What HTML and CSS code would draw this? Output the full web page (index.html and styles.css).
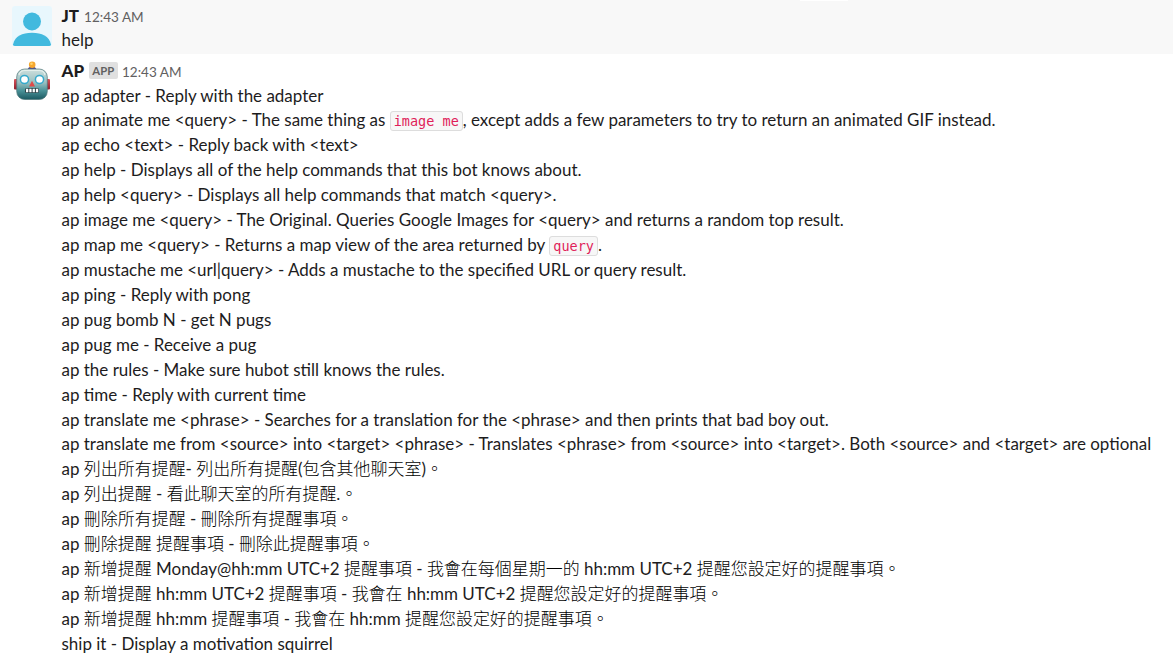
FILE: index.html
```
<!DOCTYPE html>
<html lang="en">
<head>
    <meta charset="UTF-8">
    <meta name="viewport" content="width=device-width, initial-scale=1.0">
    <title>AP - Chat</title>
    <link rel="stylesheet" href="styles.css">
</head>
<body>
    <div class="message hover">
        <div class="jump"></div>
        <svg class="avatar" viewBox="0 0 40 40">
            <rect width="40" height="40" rx="3" fill="#e8f7fd"/>
            <circle cx="20" cy="15.5" r="9" fill="#41b9de"/>
            <path d="M1 38.500 C3 30 10 26.800 20 26.800 S37 30 39 38.500 Q39 40 37 40 H3 Q1 40 1 38.500Z" fill="#41b9de"/>
        </svg>
        <div class="content">
            <div class="header"><b class="name">JT</b><span class="time">12:43 AM</span></div>
            <div class="text">help</div>
        </div>
    </div>
    <div class="message bot">
        <svg class="avatar" viewBox="0 0 40 40">
            <defs>
                <linearGradient id="face" x1="0" y1="0" x2="0" y2="1">
                    <stop offset="0" stop-color="#cfe0de"/>
                    <stop offset="0.45" stop-color="#98bfc0"/>
                    <stop offset="0.7" stop-color="#4b9399"/>
                    <stop offset="1" stop-color="#1b5961"/>
                </linearGradient>
                <linearGradient id="ear" x1="0" y1="0" x2="0" y2="1">
                    <stop offset="0" stop-color="#d9555c"/>
                    <stop offset="1" stop-color="#8e1e2b"/>
                </linearGradient>
            </defs>
            <rect x="2" y="18" width="4" height="10.500" rx="1" fill="url(#ear)"/>
            <rect x="34" y="18" width="4" height="10.500" rx="1" fill="url(#ear)"/>
            <path d="M15.500 9 Q16 5.500 20 5.500 T24.500 9Z" fill="#54498d"/>
            <circle cx="20.200" cy="3.800" r="3.300" fill="#f5a72d"/>
            <circle cx="19.500" cy="2.700" r="1.300" fill="#ffd36b"/>
            <rect x="4.700" y="8" width="30.600" height="30.500" rx="8" fill="url(#face)" stroke="#50777a" stroke-width="0.700"/>
            <path d="M7 14 Q8 9.500 13 9.500 H27 Q32 9.500 33 14" fill="none" stroke="#e4efec" stroke-width="1.200"/>
            <circle cx="12.500" cy="18.500" r="4.800" fill="#35a9cc"/>
            <circle cx="27.500" cy="18.500" r="4.800" fill="#35a9cc"/>
            <circle cx="12.500" cy="18.500" r="3.300" fill="#fff"/>
            <circle cx="27.500" cy="18.500" r="3.300" fill="#fff"/>
            <path d="M20 19.700 L23 25.500 H17Z" fill="#e04a48"/>
            <rect x="13" y="27" width="14" height="5" rx="1.500" fill="#29444a"/>
            <path d="M14 27.800h2.300v3.400h-2.300zM17.300 27.800h2.300v3.400h-2.300zM20.600 27.800h2.300v3.400h-2.300zM23.900 27.800h2.300v3.400h-2.300z" fill="#fff"/>
        </svg>
        <div class="content">
            <div class="header"><b class="name">AP</b><span class="badge">APP</span><span class="time">12:43 AM</span></div>
            <div class="text">ap adapter - Reply with the adapter</div>
            <div class="text">ap animate me &lt;query&gt; - The same thing as <code>image me</code>, except adds a few parameters to try to return an animated GIF instead.</div>
            <div class="text">ap echo &lt;text&gt; - Reply back with &lt;text&gt;</div>
            <div class="text">ap help - Displays all of the help commands that this bot knows about.</div>
            <div class="text">ap help &lt;query&gt; - Displays all help commands that match &lt;query&gt;.</div>
            <div class="text">ap image me &lt;query&gt; - The Original. Queries Google Images for &lt;query&gt; and returns a random top result.</div>
            <div class="text">ap map me &lt;query&gt; - Returns a map view of the area returned by <code>query</code>.</div>
            <div class="text">ap mustache me &lt;url|query&gt; - Adds a mustache to the specified URL or query result.</div>
            <div class="text">ap ping - Reply with pong</div>
            <div class="text">ap pug bomb N - get N pugs</div>
            <div class="text">ap pug me - Receive a pug</div>
            <div class="text">ap the rules - Make sure hubot still knows the rules.</div>
            <div class="text">ap time - Reply with current time</div>
            <div class="text">ap translate me &lt;phrase&gt; - Searches for a translation for the &lt;phrase&gt; and then prints that bad boy out.</div>
            <div class="text">ap translate me from &lt;source&gt; into &lt;target&gt; &lt;phrase&gt; - Translates &lt;phrase&gt; from &lt;source&gt; into &lt;target&gt;. Both &lt;source&gt; and &lt;target&gt; are optional</div>
            <div class="text">ap <span class="zh">列出所有提醒</span>- <span class="zh">列出所有提醒</span>(<span class="zh">包含其他聊天室</span>)<span class="zh">。</span></div>
            <div class="text">ap <span class="zh">列出提醒</span> - <span class="zh">看此聊天室的所有提醒</span>.<span class="zh">。</span></div>
            <div class="text">ap <span class="zh">刪除所有提醒</span> - <span class="zh">刪除所有提醒事項。</span></div>
            <div class="text">ap <span class="zh">刪除提醒</span> <span class="zh">提醒事項</span> - <span class="zh">刪除此提醒事項。</span></div>
            <div class="text">ap <span class="zh">新增提醒</span> Monday@hh:mm UTC+2 <span class="zh">提醒事項</span> - <span class="zh">我會在每個星期一的</span> hh:mm UTC+2 <span class="zh">提醒您設定好的提醒事項。</span></div>
            <div class="text">ap <span class="zh">新增提醒</span> hh:mm UTC+2 <span class="zh">提醒事項</span> - <span class="zh">我會在</span> hh:mm UTC+2 <span class="zh">提醒您設定好的提醒事項。</span></div>
            <div class="text">ap <span class="zh">新增提醒</span> hh:mm <span class="zh">提醒事項</span> - <span class="zh">我會在</span> hh:mm <span class="zh">提醒您設定好的提醒事項。</span></div>
            <div class="text">ship it - Display a motivation squirrel</div>
        </div>
    </div>
</body>
</html>
```
FILE: styles.css
```
body {
    font-family: Lato, "Noto Sans CJK TC", sans-serif;
    font-size: 16.98px;
    line-height: 24.9px;
    color: #1d1c1d;
    background: #fff;
    margin: 0;
    overflow: hidden;
}
.message {
    position: relative;
    display: flex;
    padding: 4px 0 0 12px;
}
.hover {
    background: #f8f8f8;
    height: 50px;
}
.bot {
    padding-top: 5px;
}
.jump {
    position: absolute;
    top: 0;
    left: 800px;
    width: 48px;
    height: 1px;
    background: #fff;
}
.avatar {
    flex: none;
    width: 40px;
    height: 40px;
    margin: 2px 9.5px 0 0;
}
.content {
    white-space: nowrap;
}
.header {
    display: flex;
    align-items: baseline;
    height: 24.55px;
}
.hover .header {
    height: 24px;
}
.name {
    font-weight: 900;
}
.time {
    font-size: 13.56px;
    color: #616061;
    margin-left: 5px;
}
.badge {
    align-self: flex-start;
    font-size: 11.3px;
    font-weight: 700;
    line-height: 17px;
    color: #616061;
    background: #e0e0e0;
    border-radius: 2px;
    padding: 0 3.8px;
    margin: 3px 0 0 4.5px;
}
.badge + .time {
    margin-left: 4px;
}
.text {
    height: 24.925px;
}
.zh {
    font-family: "Noto Sans CJK TC", sans-serif;
    font-weight: 300;
    line-height: 1;
    color: #000;
}
code {
    font-family: "DejaVu Sans Mono", monospace;
    font-size: 13.5px;
    line-height: 16px;
    color: #e01e5a;
    background: #f7f7f7;
    border: 1px solid #ddd;
    border-radius: 3px;
    padding: 1px 3px;
}
```
